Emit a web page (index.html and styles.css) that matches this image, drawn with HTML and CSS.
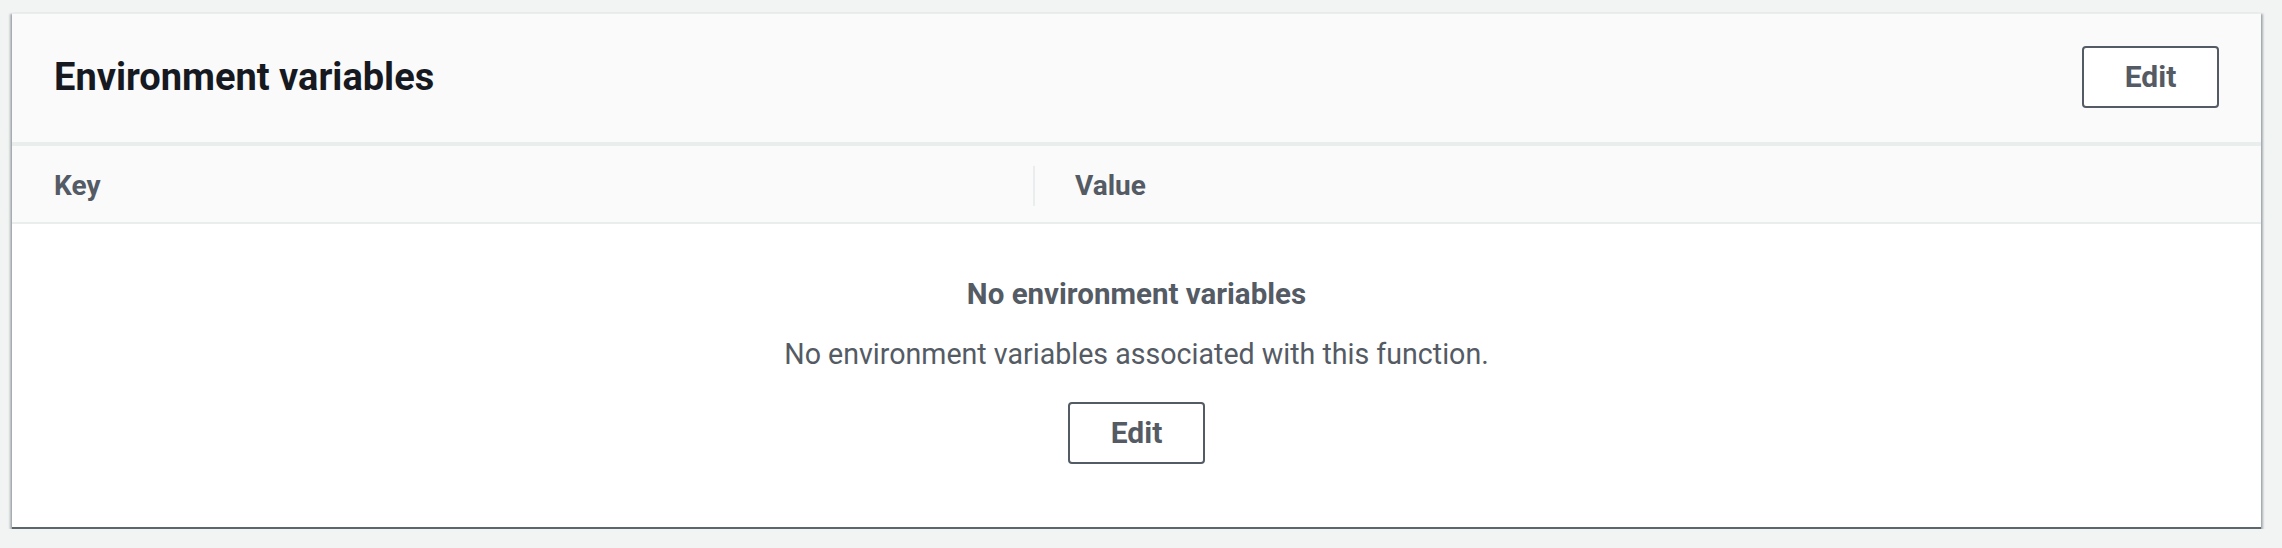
FILE: index.html
```html
<!DOCTYPE html>
<html lang="en">
<head>
<meta charset="utf-8">
<title>Environment variables</title>
<link rel="stylesheet" href="styles.css">
</head>
<body>
<section class="card">
  <header class="card-header">
    <h2 class="card-title">Environment variables</h2>
    <button class="btn" type="button">Edit</button>
  </header>
  <div class="table-head">
    <div class="th th-key">Key</div>
    <div class="th th-value">Value</div>
  </div>
  <div class="empty">
    <div class="empty-title">No environment variables</div>
    <p class="empty-text">No environment variables associated with this function.</p>
    <button class="btn" type="button">Edit</button>
  </div>
</section>
</body>
</html>
```
FILE: styles.css
```css
* { box-sizing: border-box; }
html, body { margin: 0; padding: 0; }
body {
  background: #f2f3f3;
  font-family: Roboto, "Noto Sans", "Liberation Sans", sans-serif;
  color: #16191f;
  padding: 13px 21px 0 12px;
}
.card {
  width: 2249px;
  height: 516px;
  background: #ffffff;
  border-top: 1px solid #eaeded;
  border-bottom: 2px solid #5c676d;
  box-shadow: 0 1px 1px 0 rgba(0, 28, 36, 0.3), 2px 1px 2px 0 rgba(0, 28, 36, 0.3), -2px 1px 2px 0 rgba(0, 28, 36, 0.3);
}
.card-header {
  height: 132px;
  background: #fafafa;
  display: flex;
  align-items: center;
  justify-content: space-between;
  padding: 0 42px 2px;
  border-bottom: 4px solid #eaeded;
}
.card-title {
  margin: 0;
  font-size: 38px;
  line-height: 44px;
  font-weight: 700;
  color: #16191f;
}
.btn {
  font-family: Roboto, "Noto Sans", "Liberation Sans", sans-serif;
  background: #ffffff;
  color: #545b64;
  border: 2px solid #545b64;
  border-radius: 4px;
  font-weight: 700;
  font-size: 30px;
  padding: 0;
  width: 137px;
  height: 62px;
  line-height: 58px;
  cursor: pointer;
}
.table-head {
  display: grid;
  grid-template-columns: 1021px 1fr;
  align-items: center;
  height: 78px;
  padding-top: 4px;
  background: #fafafa;
  border-bottom: 2px solid #eaeded;
}
.th {
  font-size: 28px;
  line-height: 40px;
  font-weight: 700;
  color: #545b64;
  padding-left: 42px;
}
.th-value {
  border-left: 2px solid #eaeded;
  padding-left: 40px;
}
.empty {
  display: flex;
  flex-direction: column;
  align-items: center;
  padding: 50px 0 0;
  color: #545b64;
}
.empty-title {
  font-size: 29.5px;
  line-height: 40px;
  font-weight: 700;
}
.empty-text {
  margin: 20px 0 28px;
  font-size: 28.6px;
  line-height: 40px;
}
```
